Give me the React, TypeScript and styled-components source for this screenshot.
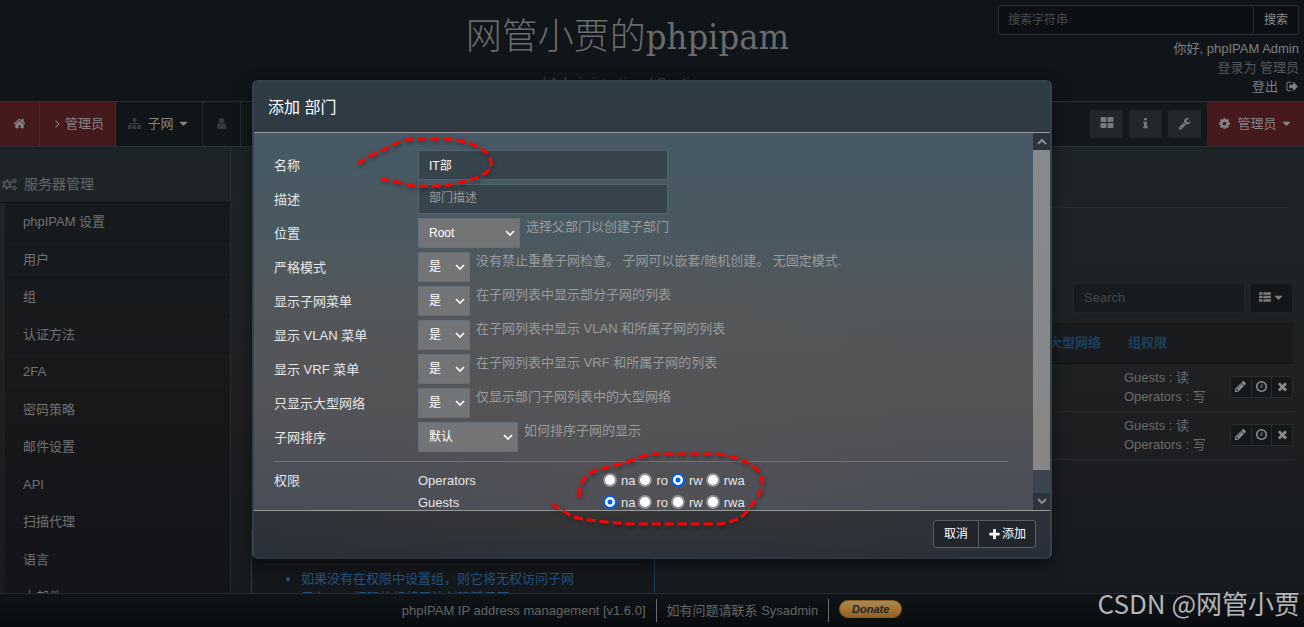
import React from "react";
import styled, { createGlobalStyle } from "styled-components";
import { FaCogs } from "react-icons/fa";

const ICONS = {
  home: "M1472 992v480q0 26-19 45t-45 19h-384v-384h-256v384h-384q-26 0-45-19t-19-45v-480q0-1 .5-3t.5-3l575-474 575 474q1 2 1 6zm223-69l-62 74q-8 9-21 11h-3q-13 0-21-7l-692-577-692 577q-12 8-24 7-13-2-21-11l-62-74q-8-10-7-23.5t11-21.5l719-599q32-26 76-26t76 26l244 204v-195q0-14 9-23t23-9h192q14 0 23 9t9 23v408l219 182q10 8 11 21.5t-7 23.5z",
  user: "M1536 1399q0 109-62.5 187t-150.5 78h-854q-88 0-150.5-78t-62.5-187q0-85 8.5-160.5t31.5-152 58.5-131 94-89 134.5-34.5q131 128 313 128t313-128q76 0 134.5 34.5t94 89 58.5 131 31.5 152 8.5 160.5zm-256-887q0 159-112.5 271.5t-271.5 112.5-271.5-112.5-112.5-271.5 112.5-271.5 271.5-112.5 271.5 112.5 112.5 271.5z",
  wrench: "M448 1472q0-26-19-45t-45-19-45 19-19 45 19 45 45 19 45-19 19-45zm644-420l-682 682q-37 37-90 37-52 0-91-37l-106-108q-38-36-38-90 0-53 38-91l681-681q39 98 114.5 173.5t173.5 114.5zm634-435q0 39-23 106-47 134-164.5 217.5t-258.5 83.5q-185 0-316.5-131.5t-131.5-316.5 131.5-316.5 316.5-131.5q58 0 121.5 16.5t107.5 46.5q16 11 16 28t-16 28l-293 169v224l193 107q5-3 79-48.5t135.5-81 70.5-35.5q15 0 23.5 10t8.5 25z",
  cog: "M1152 896q0-106-75-181t-181-75-181 75-75 181 75 181 181 75 181-75 75-181zm512-109v222q0 12-8 23t-20 13l-185 28q-19 54-39 91 35 50 107 138 10 12 10 25t-9 23q-27 37-99 108t-94 71q-12 0-26-9l-138-108q-44 23-91 38-16 136-29 186-7 28-36 28h-222q-14 0-24.5-8.5t-11.5-21.5l-28-184q-49-16-90-37l-141 107q-10 9-25 9-14 0-25-11-126-114-165-168-7-10-7-23 0-12 8-23 15-21 51-66.5t54-70.5q-27-50-41-99l-183-27q-13-2-21-12.5t-8-23.5v-222q0-12 8-23t19-13l186-28q14-46 39-92-40-57-107-138-10-12-10-24 0-10 9-23 26-36 98.5-107.5t94.5-71.5q13 0 26 10l138 107q44-23 91-38 16-136 29-186 7-28 36-28h222q14 0 24.5 8.5t11.5 21.5l28 184q49 16 90 37l142-107q9-9 24-9 13 0 25 10 129 119 165 170 7 8 7 22 0 12-8 23-15 21-51 66.5t-54 70.5q26 50 41 98l183 28q13 2 21 12.5t8 23.5z",
  times: "M1490 1322q0 40-28 68l-136 136q-28 28-68 28t-68-28l-294-294-294 294q-28 28-68 28t-68-28l-136-136q-28-28-28-68t28-68l294-294-294-294q-28-28-28-68t28-68l136-136q28-28 68-28t68 28l294 294 294-294q28-28 68-28t68 28l136 136q28 28 28 68t-28 68l-294 294 294 294q28 28 28 68z",
  plus: "M1600 736v192q0 40-28 68t-68 28h-416v416q0 40-28 68t-68 28h-192q-40 0-68-28t-28-68v-416h-416q-40 0-68-28t-28-68v-192q0-40 28-68t68-28h416v-416q0-40 28-68t68-28h192q40 0 68 28t28 68v416h416q40 0 68 28t28 68z",
  info: "M1216 1344v128q0 26-19 45t-45 19h-512q-26 0-45-19t-19-45v-128q0-26 19-45t45-19h64v-384h-64q-26 0-45-19t-19-45v-128q0-26 19-45t45-19h384q26 0 45 19t19 45v576h64q26 0 45 19t19 45zm-128-1152v192q0 26-19 45t-45 19h-256q-26 0-45-19t-19-45v-192q0-26 19-45t45-19h256q26 0 45 19t19 45z",
  grid: "M832 1024v384q0 52-38 90t-90 38h-512q-52 0-90-38t-38-90v-384q0-52 38-90t90-38h512q52 0 90 38t38 90zm0-768v384q0 52-38 90t-90 38h-512q-52 0-90-38t-38-90v-384q0-52 38-90t90-38h512q52 0 90 38t38 90zm896 768v384q0 52-38 90t-90 38h-512q-52 0-90-38t-38-90v-384q0-52 38-90t90-38h512q52 0 90 38t38 90zm0-768v384q0 52-38 90t-90 38h-512q-52 0-90-38t-38-90v-384q0-52 38-90t90-38h512q52 0 90 38t38 90z",
  pencil: "M491 1536l91-91-235-235-91 91v107h128v128h107zm523-928q0-22-22-22-10 0-17 7l-542 542q-7 7-7 17 0 22 22 22 10 0 17-7l542-542q7-7 7-17zm-54-192l416 416-832 832h-416v-416zm683 96q0 53-37 90l-166 166-416-416 166-165q36-38 90-38 53 0 91 38l235 234q37 39 37 91z",
  clock: "M1024 544v448q0 14-9 23t-23 9h-320q-14 0-23-9t-9-23v-64q0-14 9-23t23-9h224v-352q0-14 9-23t23-9h64q14 0 23 9t9 23zm416 352q0-148-73-273t-198-198-273-73-273 73-198 198-73 273 73 273 198 198 273 73 273-73 198-198 73-273zm224 0q0 209-103 385.5t-279.5 279.5-385.5 103-385.5-103-279.5-279.5-103-385.5 103-385.5 279.5-279.5 385.5-103 385.5 103 279.5 279.5 103 385.5z",
  sitemap: "M1792 1248v320q0 40-28 68t-68 28h-320q-40 0-68-28t-28-68v-320q0-40 28-68t68-28h96v-192h-512v192h96q40 0 68 28t28 68v320q0 40-28 68t-68 28h-320q-40 0-68-28t-28-68v-320q0-40 28-68t68-28h96v-192h-512v192h96q40 0 68 28t28 68v320q0 40-28 68t-68 28h-320q-40 0-68-28t-28-68v-320q0-40 28-68t68-28h96v-192q0-52 38-90t90-38h512v-192h-96q-40 0-68-28t-28-68v-320q0-40 28-68t68-28h320q40 0 68 28t28 68v320q0 40-28 68t-68 28h-96v192h512q52 0 90 38t38 90v192h96q40 0 68 28t28 68z",
  list: "M0 192h512v384h-512zM640 192h1152v384h-1152zM0 704h512v384h-512zM640 704h1152v384h-1152zM0 1216h512v384h-512zM640 1216h1152v384h-1152z",
  angle: "M1171 960q0 13-10 23l-466 466q-10 10-23 10t-23-10l-50-50q-10-10-10-23t10-23l393-393-393-393q-10-10-10-23t10-23l50-50q10-10 23-10t23 10l466 466q10 10 10 23z",
  caret: "M1408 704q0 26-19 45l-448 448q-19 19-45 19t-45-19l-448-448q-19-19-19-45t19-45 45-19h896q26 0 45 19t19 45z",
  signout: "M704 1440q0 4 1 20t.5 26.5-3 23.5-10 19.5-20.5 6.5h-320q-119 0-203.5-84.5t-84.5-203.5v-704q0-119 84.5-203.5t203.5-84.5h320q13 0 22.5 9.5t9.5 22.5q0 4 1 20t.5 26.5-3 23.5-10 19.5-20.5 6.5h-320q-66 0-113 47t-47 113v704q0 66 47 113t113 47h312l11.5 1 11.5 3 8 5.5 7 9 2 13.5zm928-544q0 26-19 45l-544 544q-19 19-45 19t-45-19-19-45v-288h-448q-26 0-45-19t-19-45v-384q0-26 19-45t45-19h448v-288q0-26 19-45t45-19 45 19l544 544q19 19 19 45z",
};

const Svg = styled.svg<{ $size: number }>`
  width: ${(p) => p.$size}px;
  height: ${(p) => p.$size}px;
  fill: currentColor;
  flex: none;
  display: block;
`;

const Icon = ({ name, size = 14 }: { name: keyof typeof ICONS; size?: number }) => (
  <Svg $size={size} viewBox="0 0 1792 1792" aria-hidden="true">
    <path d={ICONS[name]} />
  </Svg>
);

const GlobalStyle = createGlobalStyle`
  *, *::before, *::after { box-sizing: border-box; }
  body {
    margin: 0;
    background: #101519;
    color: #6c6d6e;
    font: 13px/19px "Liberation Sans", "Noto Sans CJK SC", sans-serif;
  }
  button, input, select { font: inherit; color: inherit; margin: 0; }
  a { color: inherit; text-decoration: none; }
`;

const Page = styled.div`
  position: relative;
  height: 100vh;
  display: flex;
  flex-direction: column;
  overflow: hidden;
  background: linear-gradient(#0f1418, #0e1418 16%, #1d2428 24%, #1e2224 48%, #1f1f20 65%, #191c20 82%, #15191e);
`;

/* Top header */
const Header = styled.header`
  flex: none;
  height: 101px;
  padding: 5px 5px 0 0;
  display: grid;
  grid-template-columns: 301px 1fr 301px;
  background: #0f1519;
`;

const Brand = styled.div`
  grid-column: 2;
  display: flex;
  flex-direction: column;
  align-items: center;
  padding-right: 44px;
`;

const SiteTitle = styled.h1`
  margin: 0;
  font: 300 36px/64px "DejaVu Serif Condensed", "Noto Sans CJK SC", serif;
  color: #6a6b6b;
  white-space: nowrap;
`;

const Crumbs = styled.div`
  margin-top: 4px;
  font-size: 15px;
  line-height: 20px;
  color: #3b3f42;
`;

const Account = styled.div`
  text-align: right;
  color: #78797a;
`;

const SearchGroup = styled.form`
  display: flex;
  height: 30px;
  margin-bottom: 4px;
  border: 1px solid #282d31;
  border-radius: 3px;
  background: #0c1014;
`;

const SearchInput = styled.input`
  flex: 1;
  min-width: 0;
  padding: 0 9px;
  border: 0;
  background: none;
  outline: 0;
  font-size: 12px;
  &::placeholder { color: #4a4c4e; opacity: 1; }
`;

const SearchButton = styled.button`
  width: 45px;
  padding: 0;
  border: 0;
  border-left: 1px solid #282d31;
  background: none;
  font-size: 12px;
  color: #8b8c8d;
`;

const AccountLine = styled.div<{ $dim?: boolean }>`
  display: flex;
  justify-content: flex-end;
  align-items: center;
  gap: 8px;
  line-height: 19px;
  color: ${(p) => (p.$dim ? "#555759" : "#7f8081")};
`;

/* Navigation bar */
const NavBar = styled.nav`
  flex: none;
  height: 46px;
  display: flex;
  border-top: 1px solid #2a3033;
  border-bottom: 1px solid #2a3033;
  background: #13181c;
`;

const NavItem = styled.a<{ $width: number; $red?: boolean; $gap?: number }>`
  width: ${(p) => p.$width}px;
  padding-bottom: 2px;
  display: flex;
  align-items: center;
  justify-content: center;
  gap: ${(p) => p.$gap ?? 6}px;
  border-right: 1px solid ${(p) => (p.$red ? "#5a2023" : "#242a2e")};
  background: ${(p) => (p.$red ? "#461a1c" : "#101519")};
  color: #858384;
`;

const DropLabel = styled.span`
  display: flex;
  align-items: center;
  gap: 3px;
`;

const DimIcon = styled.span`
  color: #34393c;
`;

const NavTools = styled.div`
  margin-left: auto;
  display: flex;
  align-items: center;
  gap: 6px;
`;

const ToolButton = styled.button`
  width: 33px;
  height: 28px;
  padding: 0 0 2px;
  display: flex;
  align-items: center;
  justify-content: center;
  border: 0;
  border-radius: 2px;
  background: #22272b;
  color: #787a7b;
`;

const AdminMenu = styled(NavItem)`
  height: 44px;
  border-right: 0;
`;

/* Main area */
const Main = styled.div`
  flex: 1;
  min-height: 0;
  display: flex;
  overflow: hidden;
`;

const Sidebar = styled.aside`
  flex: none;
  width: 231px;
  border-right: 1px solid #262b2f;
`;

const SideHeading = styled.h2`
  margin: 0;
  height: 56px;
  padding: 19px 0 0 2px;
  display: flex;
  align-items: center;
  gap: 7px;
  border-bottom: 1px solid #0d1013;
  font-size: 14px;
  font-weight: 400;
  color: #646667;
`;

const CogsIcon = styled(FaCogs)`
  width: 15px;
  height: 15px;
  color: #4b4f51;
`;

const SideList = styled.ul`
  margin: 0 0 0 5px;
  padding: 0;
  list-style: none;
  background: rgba(12, 12, 14, 0.35);
`;

const SideItem = styled.li`
  height: 38px;
  padding-left: 18px;
  border-bottom: 1px solid #131516;
  line-height: 38px;
  color: #717272;
  &:nth-child(even) { height: 37px; }
`;

const Content = styled.main`
  flex: 1;
  min-width: 0;
  padding: 0 11px 0 20px;
`;

const HeadingRule = styled.div`
  height: 61px;
  margin-right: 4px;
  border-bottom: 1px solid #272c2f;
`;

const TableTools = styled.div`
  margin-top: 75px;
  display: flex;
  justify-content: flex-end;
  gap: 5px;
`;

const TableSearch = styled.input`
  width: 172px;
  height: 30px;
  padding: 0 10px 2px;
  border: 1px solid #222629;
  border-radius: 3px;
  background: #181b1e;
  outline: 0;
  &::placeholder { color: #454748; opacity: 1; }
`;

const ColumnsButton = styled.button`
  width: 43px;
  height: 30px;
  padding: 0 0 2px;
  display: flex;
  align-items: center;
  justify-content: center;
  gap: 1px;
  border: 1px solid #202427;
  border-radius: 3px;
  background: #14171a;
  color: #7b7b7b;
`;

const DataTable = styled.table`
  width: 100%;
  margin-top: 10px;
  border-collapse: separate;
  border-spacing: 0;
  table-layout: fixed;
`;

const Th = styled.th<{ $width?: number }>`
  width: ${(p) => (p.$width ? p.$width + "px" : "auto")};
  height: 41px;
  padding: 0 0 2px 12px;
  border-bottom: 1px solid #0e1011;
  background: #191b1c;
  color: #1d405f;
  font-weight: 700;
  text-align: left;
  white-space: nowrap;
`;

const Td = styled.td`
  height: 48px;
  padding: 0 0 2px 8px;
  border-bottom: 1px solid #272a2c;
  color: #6b6c6c;
`;

const ActionTd = styled(Td)`
  padding: 0 0 2px;
`;

const ActionGroup = styled.div`
  width: 63px;
  margin-left: auto;
  display: flex;
  border: 1px solid #292d30;
  border-radius: 2px;
  background: #15181a;
`;

const ActionButton = styled.button`
  flex: 1;
  height: 20px;
  padding: 0;
  display: flex;
  align-items: center;
  justify-content: center;
  border: 0;
  border-left: 1px solid #292d30;
  background: none;
  color: #8a8a8a;
  &:first-child { border-left: 0; }
`;

const InfoBox = styled.div`
  width: 404px;
  height: 140px;
  margin-top: 71px;
  padding: 32px 14px 0 12px;
  border: 1px solid #1d3a54;
  background: #14171b;
  color: #24527c;
`;

const InfoList = styled.ul`
  margin: 0;
  padding: 4px 0 0 37px;
  border-top: 1px solid #22262a;
  line-height: 19px;
`;

/* Footer */
const Footer = styled.footer`
  flex: none;
  height: 34px;
  padding-right: 10px;
  display: flex;
  justify-content: center;
  align-items: center;
  border-top: 1px solid #272b2e;
  background: linear-gradient(#0f1418, #090c0f);
  color: #646565;
`;

const FooterItem = styled.span`
  padding: 0 10px;
  line-height: 23px;
  border-right: 1px solid #6b6c6d;
`;

const DonateButton = styled.button`
  width: 63px;
  height: 18px;
  margin: 0 0 4px 10px;
  padding: 0;
  border: 1px solid #8f5718;
  border-radius: 9px;
  background: linear-gradient(#a08a62, #a97732 45%, #8e6126);
  color: #1c2230;
  font: italic 700 11px/14px "Liberation Sans", sans-serif;
`;

/* Dialog */
const Dialog = styled.section`
  position: absolute;
  top: 80px;
  left: calc(50% - 400px);
  width: 800px;
  border: 2px solid;
  border-color: #34434c #36434b #30363f #36424a;
  border-radius: 6px;
  background: #2e3b44;
  box-shadow: 0 5px 15px rgba(0, 0, 0, 0.5);
  color: #e6e7e8;
`;

const DialogHeader = styled.h3`
  margin: 0;
  height: 51px;
  padding: 0 14px;
  border-bottom: 1px solid #9c9ca2;
  border-radius: 4px 4px 0 0;
  background: linear-gradient(#2d3c44, #303a43);
  font-size: 16px;
  line-height: 51px;
  font-weight: 400;
  color: #fff;
`;

const DialogMiddle = styled.div`
  display: flex;
  height: calc(100vh - 250px);
  background: radial-gradient(ellipse at 50% 95%, rgba(92, 86, 82, 0.35), transparent 55%),
    linear-gradient(#465965, #4a5961 28%, #53575a 45%, #545456 70%, #494d58);
`;

const FormArea = styled.form`
  flex: 1;
  min-width: 0;
  overflow: hidden;
  padding: 17px 25px 0 20px;
`;

const FormRow = styled.div`
  display: grid;
  grid-template-columns: 144px auto 1fr;
  align-items: start;
  height: 34px;
`;

const FieldLabel = styled.label`
  line-height: 31px;
`;

const TextField = styled.input`
  width: 250px;
  height: 30px;
  padding: 0 10px 2px;
  border: 1px solid #53626c;
  border-radius: 2px;
  background: #38444d;
  outline: 0;
  font-size: 12px;
  color: #fff;
  &::placeholder { color: #989b9e; opacity: 1; }
`;

const SelectWrap = styled.span<{ $width: number }>`
  position: relative;
  width: ${(p) => p.$width}px;
  height: 30px;
`;

const Select = styled.select`
  appearance: none;
  width: 100%;
  height: 30px;
  padding: 0 10px;
  border: 1px solid #65707a;
  border-radius: 0;
  background: #737476;
  outline: 0;
  font-size: 12px;
  color: #fff;
`;

const Chevron = styled.svg`
  position: absolute;
  top: 12px;
  right: 5px;
  width: 10px;
  height: 7px;
  fill: none;
  stroke: #fff;
  stroke-width: 1.6;
  pointer-events: none;
`;

const Help = styled.span`
  padding-left: 6px;
  line-height: 18px;
  color: #999b9c;
`;

const Divider = styled.hr`
  margin: 5px 0 7px;
  border: 0;
  border-top: 1px solid #6f7276;
`;

const PermissionRow = styled.div`
  display: grid;
  grid-template-columns: 144px 185px 1fr;
  align-items: center;
  height: 22px;
`;

const RadioSet = styled.div`
  display: flex;
  gap: 3px;
`;

const RadioLabel = styled.label`
  display: flex;
  align-items: center;
  gap: 4px;
`;

const Radio = styled.input`
  appearance: none;
  width: 14px;
  height: 14px;
  border: 2px solid #8f8f9d;
  border-radius: 50%;
  background: #fff;
  &:checked {
    border-color: #0060df;
    background: radial-gradient(circle, #0060df 0 2px, #fff 3px);
  }
`;

const ScrollBar = styled.div`
  flex: none;
  width: 17px;
  display: flex;
  flex-direction: column;
  background: #3e444f;
`;

const ScrollArrow = styled.button`
  height: 17px;
  padding: 0;
  display: flex;
  align-items: center;
  justify-content: center;
  border: 0;
  background: #2c333c;
`;

const ScrollGlyph = styled.svg`
  width: 10px;
  height: 7px;
  fill: none;
  stroke: #898c90;
  stroke-width: 2;
`;

const ScrollTrack = styled.div`
  flex: 1;
  padding-bottom: 23px;
`;

const ScrollThumb = styled.div`
  height: 100%;
  background: linear-gradient(#858a8f, #87888a 60%, #868686);
`;

const DialogFooter = styled.div`
  height: 47px;
  padding: 9px 14px;
  display: flex;
  justify-content: flex-end;
  border-top: 1px solid #97989a;
  border-radius: 0 0 4px 4px;
  background: radial-gradient(ellipse at 45% 0, #363636, #2a303a 90%);
`;

const FooterButton = styled.button<{ $side: "left" | "right" }>`
  width: ${(p) => (p.$side === "left" ? 46 : 58)}px;
  height: 28px;
  margin-left: ${(p) => (p.$side === "left" ? 0 : -1)}px;
  padding: 0;
  display: flex;
  align-items: center;
  justify-content: center;
  gap: 1px;
  border: 1px solid #56606b;
  border-radius: ${(p) => (p.$side === "left" ? "3px 0 0 3px" : "0 3px 3px 0")};
  background: #22252c;
  font-size: 12px;
  color: #fff;
`;

const Annotation = styled.svg`
  position: absolute;
  top: -2px;
  left: -2px;
  width: 800px;
  height: 479px;
  pointer-events: none;
  fill: none;
  stroke: #ff0000;
  stroke-width: 3;
  stroke-dasharray: 9 4;
  filter: drop-shadow(1px 2px 2px rgba(0, 0, 0, 0.4));
`;

const Watermark = styled.div`
  position: absolute;
  right: 4px;
  bottom: 5px;
  font: 400 26px/38px "Liberation Sans Narrow", "Noto Sans CJK SC", sans-serif;
  color: #b4b5b6;
  white-space: nowrap;
`;

const sideItems = ["phpIPAM 设置", "用户", "组", "认证方法", "2FA", "密码策略", "邮件设置", "API", "扫描代理", "语言", "小部件"];

const selectRows = [
  { id: "parent", label: "位置", value: "Root", width: 102, help: "选择父部门以创建子部门" },
  { id: "strict", label: "严格模式", value: "是", width: 52, help: "没有禁止重叠子网检查。 子网可以嵌套/随机创建。 无固定模式." },
  { id: "subnets", label: "显示子网菜单", value: "是", width: 52, help: "在子网列表中显示部分子网的列表" },
  { id: "vlan", label: "显示 VLAN 菜单", value: "是", width: 52, help: "在子网列表中显示 VLAN 和所属子网的列表" },
  { id: "vrf", label: "显示 VRF 菜单", value: "是", width: 52, help: "在子网列表中显示 VRF 和所属子网的列表" },
  { id: "supernet", label: "只显示大型网络", value: "是", width: 52, help: "仅显示部门子网列表中的大型网络" },
  { id: "order", label: "子网排序", value: "默认", width: 100, help: "如何排序子网的显示" },
];

const permissions = [
  { title: "权限", group: "Operators", selected: "rw" },
  { title: "", group: "Guests", selected: "na" },
];

const levels = ["na", "ro", "rw", "rwa"];

const AddSectionDialog = () => (
  <Dialog role="dialog" aria-label="添加 部门">
    <DialogHeader>添加 部门</DialogHeader>
    <DialogMiddle>
      <FormArea>
        <FormRow>
          <FieldLabel htmlFor="name">名称</FieldLabel>
          <TextField id="name" defaultValue="IT部" />
        </FormRow>
        <FormRow>
          <FieldLabel htmlFor="description">描述</FieldLabel>
          <TextField id="description" placeholder="部门描述" />
        </FormRow>
        {selectRows.map((row) => (
          <FormRow key={row.id}>
            <FieldLabel htmlFor={row.id}>{row.label}</FieldLabel>
            <SelectWrap $width={row.width}>
              <Select id={row.id}>
                <option>{row.value}</option>
              </Select>
              <Chevron viewBox="0 0 10 7">
                <path d="M1 1l4 4 4-4" />
              </Chevron>
            </SelectWrap>
            <Help>{row.help}</Help>
          </FormRow>
        ))}
        <Divider />
        {permissions.map((p) => (
          <PermissionRow key={p.group}>
            <span>{p.title}</span>
            <span>{p.group}</span>
            <RadioSet>
              {levels.map((level) => (
                <RadioLabel key={level}>
                  <Radio type="radio" name={p.group} defaultChecked={level === p.selected} />
                  {level}
                </RadioLabel>
              ))}
            </RadioSet>
          </PermissionRow>
        ))}
      </FormArea>
      <ScrollBar>
        <ScrollArrow type="button" aria-label="Scroll up">
          <ScrollGlyph viewBox="0 0 10 7"><path d="M1 6l4-4 4 4" /></ScrollGlyph>
        </ScrollArrow>
        <ScrollTrack><ScrollThumb /></ScrollTrack>
        <ScrollArrow type="button" aria-label="Scroll down">
          <ScrollGlyph viewBox="0 0 10 7"><path d="M1 1l4 4 4-4" /></ScrollGlyph>
        </ScrollArrow>
      </ScrollBar>
    </DialogMiddle>
    <DialogFooter>
      <FooterButton type="button" $side="left">取消</FooterButton>
      <FooterButton type="button" $side="right"><Icon name="plus" size={13} />添加</FooterButton>
    </DialogFooter>
    <Annotation viewBox="252 80 800 479" aria-hidden="true">
      <path d="M358 164Q366 157 377 153L397 143Q405 139 415 139H445Q475 141 488 154Q492 160 491 166Q490 174 470 180L450 185Q430 187 413 186L397 182L381 179" />
      <path d="M579 497Q579 476 597 470L627 462Q645 455 655 454H717Q742 457 757 469Q763 478 762 485Q760 496 753 503Q746 515 738 519L722 524H630Q590 521 573 517Q560 509 550 503" />
    </Annotation>
  </Dialog>
);

export default function App() {
  return (
    <>
      <GlobalStyle />
      <Page>
        <Header>
          <Brand>
            <SiteTitle>网管小贾的phpipam</SiteTitle>
            <Crumbs>/ Administration / Sections</Crumbs>
          </Brand>
          <Account>
            <SearchGroup>
              <SearchInput aria-label="搜索字符串" placeholder="搜索字符串" />
              <SearchButton type="button">搜索</SearchButton>
            </SearchGroup>
            <AccountLine><a href="#account">你好, phpIPAM Admin</a></AccountLine>
            <AccountLine $dim>登录为 管理员</AccountLine>
            <AccountLine as="a" href="#logout">登出 <Icon name="signout" size={13} /></AccountLine>
          </Account>
        </Header>
        <NavBar>
          <NavItem href="#home" $width={40} $red aria-label="Home"><Icon name="home" size={13} /></NavItem>
          <NavItem href="#admin" $width={76} $gap={1} $red><Icon name="angle" size={13} />管理员</NavItem>
          <NavItem href="#subnets" $width={87}>
            <DimIcon><Icon name="sitemap" size={13} /></DimIcon>
            <DropLabel>子网<Icon name="caret" size={13} /></DropLabel>
          </NavItem>
          <NavItem href="#user" $width={38} aria-label="User"><DimIcon><Icon name="user" size={13} /></DimIcon></NavItem>
          <NavTools>
            <ToolButton aria-label="Dashboard"><Icon name="grid" size={14} /></ToolButton>
            <ToolButton aria-label="Info"><Icon name="info" size={13} /></ToolButton>
            <ToolButton aria-label="Tools"><Icon name="wrench" size={13} /></ToolButton>
            <AdminMenu href="#menu" $width={97} $red>
              <Icon name="cog" size={13} />
              <DropLabel>管理员<Icon name="caret" size={13} /></DropLabel>
            </AdminMenu>
          </NavTools>
        </NavBar>
        <Main>
          <Sidebar>
            <SideHeading><CogsIcon />服务器管理</SideHeading>
            <SideList>
              {sideItems.map((item) => (
                <SideItem key={item}><a href="#item">{item}</a></SideItem>
              ))}
            </SideList>
          </Sidebar>
          <Content>
            <HeadingRule />
            <TableTools>
              <TableSearch aria-label="Search" placeholder="Search" />
              <ColumnsButton aria-label="Columns"><Icon name="list" size={12} /><Icon name="caret" size={13} /></ColumnsButton>
            </TableTools>
            <DataTable>
              <thead>
                <tr>
                  <Th />
                  <Th $width={79}>大型网络</Th>
                  <Th $width={107}>组权限</Th>
                  <Th $width={70} />
                </tr>
              </thead>
              <tbody>
                {[0, 1].map((row) => (
                  <tr key={row}>
                    <Td />
                    <Td />
                    <Td>Guests : 读<br />Operators : 写</Td>
                    <ActionTd>
                      <ActionGroup>
                        <ActionButton aria-label="Edit"><Icon name="pencil" size={13} /></ActionButton>
                        <ActionButton aria-label="Order"><Icon name="clock" size={13} /></ActionButton>
                        <ActionButton aria-label="Delete"><Icon name="times" size={13} /></ActionButton>
                      </ActionGroup>
                    </ActionTd>
                  </tr>
                ))}
              </tbody>
            </DataTable>
            <InfoBox>
              <InfoList>
                <li>如果没有在权限中设置组，则它将无权访问子网</li>
                <li>只有 RO 权限的组将无法创建新子网</li>
              </InfoList>
            </InfoBox>
          </Content>
        </Main>
        <Footer>
          <FooterItem>phpIPAM IP address management [v1.6.0]</FooterItem>
          <FooterItem>如有问题请联系 Sysadmin</FooterItem>
          <DonateButton>Donate</DonateButton>
        </Footer>
        <AddSectionDialog />
        <Watermark>CSDN @网管小贾</Watermark>
      </Page>
    </>
  );
}
